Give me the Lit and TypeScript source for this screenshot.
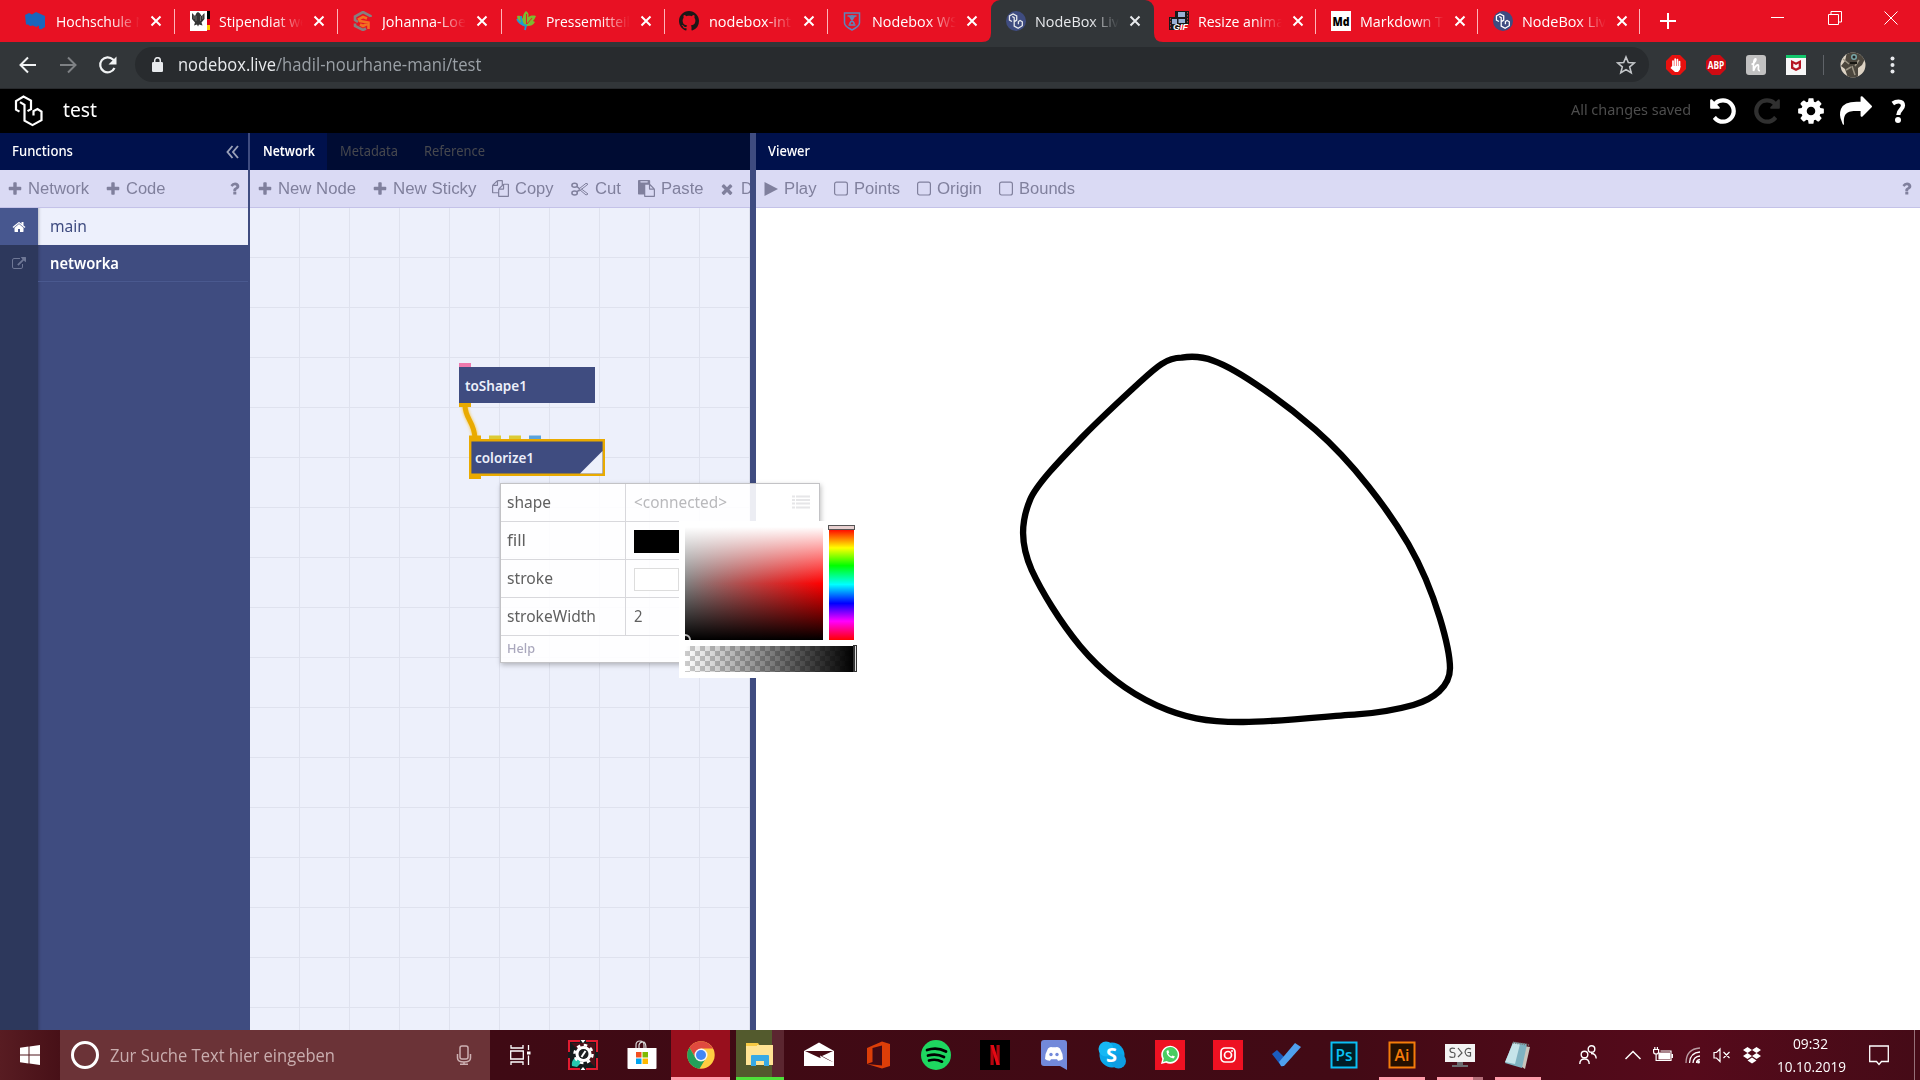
import { LitElement, html, svg, css } from "lit";
import { customElement, property } from "lit/decorators.js";

/* ---------- text that is condensed or widened to a given run width ---------- */
@customElement("text-run")
class TextRun extends LitElement {
  @property({ type: Number }) w = 0;
  static styles = css`
    :host { display: inline-block; white-space: nowrap; flex: none; }
    .run { display: inline-block; transform-origin: 0 50%; white-space: pre; }
  `;
  render() {
    return html`<span class="run"><slot></slot></span>`;
  }
  firstUpdated() {
    const run = this.renderRoot.querySelector(".run") as HTMLElement;
    const natural = run.getBoundingClientRect().width;
    if (this.w && natural) {
      run.style.transform = `scaleX(${this.w / natural})`;
      this.style.width = `${this.w}px`;
    }
  }
}

const fa = (d: string, size = 16, flip = false) => html`
  <svg width=${size} height=${size} viewBox="0 0 1792 1792" fill="currentColor">
    <g transform=${flip ? "translate(1792 0) scale(-1 1)" : ""}>${svg`<path d=${d} />`}</g>
  </svg>`;

const P = {
  plus: "M1600 736v192q0 40-28 68t-68 28h-416v416q0 40-28 68t-68 28h-192q-40 0-68-28t-28-68v-416h-416q-40 0-68-28t-28-68v-192q0-40 28-68t68-28h416v-416q0-40 28-68t68-28h192q40 0 68 28t28 68v416h416q40 0 68 28t28 68z",
  times: "M1490 1322q0 40-28 68l-136 136q-28 28-68 28t-68-28l-294-294-294 294q-28 28-68 28t-68-28l-136-136q-28-28-28-68t28-68l294-294-294-294q-28-28-28-68t28-68l136-136q28-28 68-28t68 28l294 294 294-294q28-28 68-28t68 28l136 136q28 28 28 68t-28 68l-294 294 294 294q28 28 28 68z",
  cog: "M1152 896q0-106-75-181t-181-75-181 75-75 181 75 181 181 75 181-75 75-181zm512-109v222q0 12-8 23t-20 13l-185 28q-19 54-39 91 35 50 107 138 10 12 10 25t-9 23q-27 37-99 108t-94 71q-12 0-26-9l-138-108q-44 23-91 38-16 136-29 186-7 28-36 28h-222q-14 0-24.500-8.500t-11.500-21.500l-28-184q-49-16-90-37l-141 107q-10 9-25 9-14 0-25-11-126-114-165-168-7-10-7-23 0-12 8-23 15-21 51-66.500t54-70.500q-27-50-41-99l-183-27q-13-2-21-12.500t-8-23.500v-222q0-12 8-23t19-13l186-28q14-46 39-92-40-57-107-138-10-12-10-24 0-10 9-23 26-36 98.500-107.500t94.500-71.500q13 0 26 10l138 107q44-23 91-38 16-136 29-186 7-28 36-28h222q14 0 24.500 8.500t11.500 21.500l28 184q49 16 90 37l142-107q9-9 24-9 13 0 25 10 129 119 165 170 7 8 7 22 0 12-8 23-15 21-51 66.500t-54 70.500q26 50 41 98l183 28q13 2 21 12.500t8 23.500z",
  undo: "M1664 896q0 156-61 298t-164 245-245 164-298 61q-172 0-327-72.500t-264-204.500q-7-10-6.500-22.500t8.500-20.500l137-138q10-9 25-9 16 2 23 12 73 95 179 147t225 52q104 0 198.500-40.500t163.500-109.500 109.500-163.500 40.500-198.500-40.500-198.500-109.500-163.500-163.500-109.500-198.500-40.500q-98 0-188 35.500t-160 101.500l137 138q31 30 14 69-17 40-59 40h-448q-26 0-45-19t-19-45v-448q0-42 40-59 39-17 69 14l130 129q107-101 244.500-156.500t284.500-55.500q156 0 298 61t245 164 164 245 61 298z",
  home: "M1472 992v480q0 26-19 45t-45 19h-384v-384h-256v384h-384q-26 0-45-19t-19-45v-480q0-1 .5-3t.5-3l575-474 575 474q1 2 1 6zm223-69l-62 74q-8 9-21 11h-3q-13 0-21-7l-692-577-692 577q-12 8-24 7-13-2-21-11l-62-74q-8-10-7-23.500t11-21.500l719-599q32-26 76-26t76 26l244 204v-195q0-14 9-23t23-9h192q14 0 23 9t9 23v408l219 182q10 8 11 21.500t-7 23.500z",
  ext: "M1408 928v320q0 119-84.500 203.500t-203.500 84.500h-832q-119 0-203.500-84.500t-84.500-203.500v-832q0-119 84.500-203.500t203.500-84.500h704q14 0 23 9t9 23v64q0 14-9 23t-23 9h-704q-66 0-113 47t-47 113v832q0 66 47 113t113 47h832q66 0 113-47t47-113v-320q0-14 9-23t23-9h64q14 0 23 9t9 23zm384-864v512q0 26-19 45t-45 19-45-19l-176-176-652 652q-10 10-23 10t-23-10l-114-114q-10-10-10-23t10-23l652-652-176-176q-19-19-19-45t19-45 45-19h512q26 0 45 19t19 45z",
  share: "M1792 640q0 26-19 45l-512 512q-19 19-45 19t-45-19-19-45v-256h-224q-98 0-175.500 6t-154 21.500-133 42.500-105.500 69.500-80 101-48.500 138.500-17.500 181q0 55 5 123 0 6 2.500 23.500t2.500 26.500q0 15-8.500 25t-23.500 10q-16 0-28-17-7-9-13-22t-13.500-30-10.500-24q-127-285-127-451 0-199 53-333 162-403 875-403h224v-256q0-26 19-45t45-19 45 19l512 512q19 19 19 45z",
  question: "M1088 1256v240q0 16-12 28t-28 12h-240q-16 0-28-12t-12-28v-240q0-16 12-28t28-12h240q16 0 28 12t12 28zm316-600q0 54-15.500 101t-35 76.500-55 59.500-57.500 43.500-61 35.500q-41 23-68.500 65t-27.500 67q0 17-12 32.500t-28 15.500h-240q-15 0-25.500-18.500t-10.500-37.500v-45q0-83 65-156.500t143-108.500q59-27 84-56t25-76q0-42-46.500-74t-107.500-32q-65 0-108 29-35 25-107 115-13 16-31 16-12 0-25-8l-164-125q-13-10-15.500-25t5.500-28q160-266 464-266 80 0 161 31t146 83 106 127.500 41 158.500z",
  files: "M1696 384q40 0 68 28t28 68v1216q0 40-28 68t-68 28h-960q-40 0-68-28t-28-68v-288h-544q-40 0-68-28t-28-68v-672q0-40 20-88t48-76l408-408q28-28 76-48t88-20h416q40 0 68 28t28 68v328q68-40 128-40h416zm-544 213l-299 299h299v-299zm-640-384l-299 299h299v-299zm196 647l316-316v-416h-384v416q0 40-28 68t-68 28h-416v640h512v-256q0-40 20-88t48-76zm956 804v-1152h-384v416q0 40-28 68t-68 28h-416v640h896z",
  paste: "M768 1664h896v-640h-416q-40 0-68-28t-28-68v-416h-384v1152zm256-1440v-64q0-13-9.500-22.500t-22.500-9.500h-704q-13 0-22.500 9.500t-9.500 22.500v64q0 13 9.500 22.500t22.500 9.500h704q13 0 22.500-9.500t9.500-22.500zm256 672h299l-299-299v299zm512 128v672q0 40-28 68t-68 28h-960q-40 0-68-28t-28-68v-160h-544q-40 0-68-28t-28-68v-1344q0-40 28-68t68-28h1088q40 0 68 28t28 68v328q21 13 36 28l408 408q28 28 48 76t20 88z",
};

const knot = svg`
  <path d="M8.5 16.5 4 14V6.500L10.500 3 17 6.500V14l-3.500 2.200 M9 7.500l3.500 2V24.500l7 4 7.500-4.500V17l-4-2.500-3 2v5" fill="none" stroke="currentColor" stroke-width="2.300"/>`;
const knotIcon = html`<svg class="knot" width="20" height="20" viewBox="0 0 20 20"><circle cx="10" cy="10" r="10" fill="#3f4c80"/><g transform="translate(1.200 1.300) scale(.56)">${knot}</g></svg>`;

/* ---------- browser window frame ---------- */
const favicons: Record<string, unknown> = {
  hs: html`<svg width="20" height="20" viewBox="0 0 20 20"><path d="M0 4 4 2l3 1.500L11 1l9 4v11l-4 2.500-2-1v-3l-3 1.500-3-1.500-3 .5-2-1.500H1z" fill="#1a66bd"/></svg>`,
  eagle: html`<svg width="20" height="20" viewBox="0 0 20 20"><path fill="#fff" d="M0 0h17v20H0z"/><path d="M17 0h3v8h-3z" fill="#000"/><path d="M17 8h3v6h-3z" fill="#e00018"/><path d="M17 14h3v5h-3z" fill="#fc0"/><path d="M2 2l3 3 1.500-3L8 1l2 1.500L11.500 5l3-3v6l-3 3.500 1 3L9 13.500 8 15.500 7 13.500 4 14.500l1-3L2 8z" fill="#333"/><path d="M4 4v4M6 5v5M10.500 5v5M12.700 4v4" stroke="#999" stroke-width=".6"/></svg>`,
  hexS: html`<svg width="20" height="20" viewBox="0 0 20 20" fill="none" stroke-width="2.600"><path d="M17.500 6V5L10 1 2 5.500V9l3 2M2 12.500V15l8 4 3-1.500" stroke="#86807f"/><path d="M14 7.500l-4-1.500-4 2 1 2 8.500 1.500V18M14 13l-4 2-3-1.500" stroke="#f37021"/></svg>`,
  leaf: html`<svg width="20" height="20" viewBox="0 0 20 20"><path d="M1 5c3-1 5 0 6 3 0-3 0-5 3-8 3 2 3 4 2 6 2-1 4-2 8-1-1 2-2 4-3 5l2 1c-2 3-4 4-7 4-5 1-10-2-11-10z" fill="#7dba2f"/><path d="M1 8c2 4 4 6 9 6.500L9 19M5 5c0 4 1 8 4 10" stroke="#1e9bd0" stroke-width="1.800" fill="none"/><path d="M10.500 3v10M16 7l-5 6" stroke="#e91528" stroke-width=".9"/></svg>`,
  github: html`<svg width="20" height="20" viewBox="0 0 16 16"><path fill="#1b1817" d="M8 0C3.580 0 0 3.580 0 8c0 3.540 2.290 6.530 5.470 7.590.4.070.55-.17.55-.38 0-.19-.01-.82-.01-1.490-2.010.37-2.530-.49-2.690-.94-.09-.23-.48-.94-.82-1.130-.28-.15-.68-.52-.01-.53.63-.01 1.080.58 1.230.82.72 1.210 1.870.87 2.330.66.07-.52.28-.87.510-1.070-1.780-.2-3.640-.89-3.640-3.950 0-.87.31-1.590.82-2.150-.08-.2-.36-1.020.08-2.120 0 0 .67-.21 2.200.82.640-.18 1.320-.27 2-.27s1.360.09 2 .27c1.530-1.040 2.200-.82 2.200-.82.44 1.100.16 1.920.08 2.120.51.56.82 1.270.82 2.150 0 3.070-1.870 3.750-3.650 3.950.29.25.54.73.54 1.480 0 1.070-.01 1.930-.01 2.200 0 .21.15.46.55.38A8.010 8.010 0 0 0 16 8c0-4.420-3.580-8-8-8z"/></svg>`,
  shield: html`<svg width="20" height="20" viewBox="0 0 20 20" fill="none" stroke="#5d86bb" stroke-width="1.500"><path d="M2.500 2h15v10c0 3-3.500 5-7.500 7-4-2-7.500-4-7.500-7z"/><path d="M5.500 5h9M7.500 5l5 8M12.500 5l-5 8M6.500 14h7M10 4v3"/></svg>`,
  knot: knotIcon,
  gif: html`<svg width="20" height="20" viewBox="0 0 20 20"><path fill="#181818" d="M6 0h14v14H6zM0 6h11v13H0z"/><path fill="#98afd4" d="M9 1h7v5H9zM9.500 8H16v4H9.500zM3 8h5v5H3z"/><path d="M18.500 1v13M1.500 7v12" stroke="#a44" stroke-dasharray="1.500 1.500"/><text x="4" y="19" font-family="Liberation Sans" font-weight="700" font-style="italic" font-size="9" fill="#fff" textLength="15" lengthAdjust="spacingAndGlyphs">GIF</text></svg>`,
  md: html`<svg width="20" height="20" viewBox="0 0 20 20"><path fill="#fff" d="M0 0h20v20H0z"/><text x="1.500" y="14.500" font-family="Open Sans" font-weight="800" font-size="12" textLength="17" lengthAdjust="spacingAndGlyphs">Md</text></svg>`,
};
const tabs = [
  ["hs", "Hochschule N", 90], ["eagle", "Stipendiat we", 89], ["hexS", "Johanna-Loe", 84], ["leaf", "Pressemitteil", 84],
  ["github", "nodebox-int", 82], ["shield", "Nodebox WS", 86], ["knot", "NodeBox Liv", 84], ["gif", "Resize anima", 86],
  ["md", "Markdown T", 83], ["knot", "NodeBox Liv", 84],
] as [string, string, number][];

@customElement("browser-chrome")
class BrowserChrome extends LitElement {
  static styles = css`
    :host { display: block; font-family: "Open Sans", "Noto Sans", sans-serif; }
    svg { display: block; flex: none; }
    .tabs { height: 42px; background: #e81123; display: flex; padding-left: 12px; color: #fff; }
    .tab { width: 163.200px; flex: none; height: 42px; box-sizing: border-box; display: flex; align-items: center; padding: 0 0 0 14.500px; font-size: 15px; position: relative; }
    .tab:nth-child(n+8) { width: 162px; }
    .tab:first-child { padding-left: 13px; }
    .tab::after { content: ""; position: absolute; right: 0; top: 9px; width: 1px; height: 25px; background: #ffb3b9; }
    .tab.active { background: #323639; border-radius: 9px 9px 0 0; color: #e8eaed; }
    .tab.active::after, .tab.before::after { display: none; }
    .tab.active .foot { position: absolute; bottom: 0; left: -9px; width: 181px; height: 9px; }
    .title { width: 84px; margin: -1px 0 0 9.500px; overflow: hidden; -webkit-mask-image: linear-gradient(90deg, #000 66%, transparent 100%); mask-image: linear-gradient(90deg, #000 66%, transparent 100%); }
    .tab:first-child .title { margin-left: 10.500px; }
    .x { margin-left: 10px; }
    .new { align-self: center; margin-left: 20px; }
    .win { margin-left: auto; display: flex; gap: 42.500px; padding-right: 22px; padding-top: 11px; }
    .bar { height: 47px; background: #323639; box-sizing: border-box; border-bottom: 1px solid #27292c; display: flex; align-items: center; color: #e8eaed; }
    .nav { width: 135px; display: flex; padding-left: 18px; box-sizing: border-box; gap: 20px; margin-top: -1px; }
    .omni { width: 1514px; height: 35px; border-radius: 18px; background: #282b2e; display: flex; align-items: center; font-size: 17.500px; padding: 0 13px 0 17px; box-sizing: border-box; margin-top: -1px; }
    .omni text-run { margin-top: -2px; }
    .lock { margin-right: 15px; }
    .path { color: #9aa0a6; }
    .star { margin-left: auto; }
    .ext { display: flex; align-items: center; gap: 20px; margin-left: 17px; margin-top: -1px; }
    .line { width: 1px; height: 20px; background: #5f6368; margin: 0 -4px 0 -3px; }
  `;
  render() {
    return html`
      <div class="tabs">
        ${tabs.map(([icon, label, w], i) => html`
          <div class="tab ${i === 6 ? "active" : i === 5 ? "before" : ""}">
            ${i === 6 ? html`<svg class="foot" viewBox="0 0 181 9"><path fill="#323639" d="M0 9q9 0 9-9v9zM181 9q-9 0-9-9v9z"/></svg>` : ""}
            ${favicons[icon]}
            <div class="title"><text-run .w=${w}>${label}</text-run></div>
            <svg class="x" width="12" height="12" viewBox="0 0 12 12" stroke="currentColor" stroke-width="2"><path d="M1.500 1.500l9 9M10.500 1.500l-9 9"/></svg>
          </div>`)}
        <svg class="new" width="16" height="16" viewBox="0 0 16 16" stroke="#fff" stroke-width="2"><path d="M8 0v16M0 8h16"/></svg>
        <div class="win">
          <svg width="14" height="14" viewBox="0 0 14 14" stroke="#fff"><path d="M0 6.500h13"/></svg>
          <svg width="14" height="14" viewBox="0 0 14 14" fill="none" stroke="#fff"><path d="M.5 3.500h10v10H.5zM3 3V.5h10.500V11H11"/></svg>
          <svg width="14" height="14" viewBox="0 0 14 14" stroke="#fff"><path d="M.5 .5l13 13M13.500 .5l-13 13"/></svg>
        </div>
      </div>
      <div class="bar">
        <div class="nav">
          <svg width="20" height="20" viewBox="0 0 20 20" fill="none" stroke="#f1f3f4" stroke-width="2"><path d="M18 10H3M10 2.500 2.500 10l7.500 7.500"/></svg>
          <svg width="20" height="20" viewBox="0 0 20 20" fill="none" stroke="#7e8184" stroke-width="2"><path d="M2 10h15M10 2.500l7.500 7.500-7.500 7.500"/></svg>
          <svg width="20" height="20" viewBox="0 0 20 20"><path d="M16.500 13A7.500 7.500 0 1 1 15 4.500l2 2" fill="none" stroke="#f1f3f4" stroke-width="2.200"/><path d="M18.500 1.500v8h-8z" fill="#f1f3f4"/></svg>
        </div>
        <div class="omni">
          <svg class="lock" width="11" height="15" viewBox="0 0 11 15"><rect y="5" width="11" height="10" rx="1.300" fill="#e8eaed"/><path d="M2.700 6V3.500a2.800 2.800 0 0 1 5.600 0V6" fill="none" stroke="#e8eaed" stroke-width="1.500"/></svg>
          <text-run .w=${98}>nodebox.live</text-run><text-run class="path" .w=${205.5}>/hadil-nourhane-mani/test</text-run>
          <svg class="star" width="20" height="20" viewBox="0 0 20 20" fill="none" stroke="#c3c6c9" stroke-width="1.600"><path d="M10 2l2.300 5.600 6 .4-4.600 3.900 1.500 5.900L10 14.600l-5.200 3.200 1.500-5.900L1.700 8l6-.4z"/></svg>
        </div>
        <div class="ext">
          <svg width="20" height="20" viewBox="0 0 20 20"><path fill="#e8110f" d="M6 0h8l6 6v8l-6 6H6l-6-6V6z"/><path d="M7 6v6M9.200 4v8M11.400 4.500V12M13.500 6.500V12" stroke="#fff" stroke-width="1.700" stroke-linecap="round"/><path fill="#fff" d="M6 11h8.500l-.5 3.500-2 2.500H9l-4.500-4 .8-1z"/></svg>
          <svg width="20" height="20" viewBox="0 0 20 20"><path fill="#d00a12" d="M6 0h8l6 6v8l-6 6H6l-6-6V6z"/><text x="1.800" y="13.700" font-family="Open Sans" font-weight="700" font-size="10" fill="#fff" textLength="16.500" lengthAdjust="spacingAndGlyphs">ABP</text></svg>
          <svg width="20" height="20" viewBox="0 0 20 20"><rect width="20" height="20" rx="3" fill="#c1c1c1"/><path d="M5.500 9.500c4-1.500 5.500-6.500 3.500-5.500-2 1-1.500 6-1.500 12 1-5 5-8 5-5 0 2-1 5 1.500 4.500" fill="none" stroke="#fff" stroke-width="1.700"/></svg>
          <svg width="20" height="20" viewBox="0 0 20 20"><path fill="#f7f7f7" d="M0 0h20v20H0z"/><path fill="#12c76c" d="M0 0h20v3H0z"/><path fill="#b51423" d="M5 5l5 2.500L15 5v8.500L10 16l-5-2.500zM7.300 8.500V12l2.700 1.500 2.700-1.500V8.500L10 10z" fill-rule="evenodd"/></svg>
          <div class="line"></div>
          <svg width="26" height="26" viewBox="0 0 26 26"><defs><clipPath id="av"><circle cx="13" cy="13" r="12.500"/></clipPath></defs><g clip-path="url(#av)"><path fill="#ddd3c4" d="M0 0h26v26H0z"/><path fill="#4b463d" d="M7 0h12l7 5-4 8-4 3v10H8l-3-9-4-3 4-5z"/><path d="M3 7l6 5M12 14l3 9M19 8l-4 6M6 18l5-3" stroke="#9c9585" stroke-width="1.500"/><circle cx="14" cy="5" r="3" fill="#78a6a8"/><circle cx="14" cy="5" r="1.500" fill="#222"/><path d="M10 11h7" stroke="#181713" stroke-width="2"/></g></svg>
          <svg width="14" height="20" viewBox="0 0 14 20" fill="#e8eaed"><circle cx="6.500" cy="3.500" r="2"/><circle cx="6.500" cy="10" r="2"/><circle cx="6.500" cy="16.500" r="2"/></svg>
        </div>
      </div>`;
  }
}

const outline =
  "M640 62C720 90 860 195 945 268C1060 368 1165 510 1225 612C1310 760 1350 930 1350 985C1350 1040 1300 1078 1240 1095" +
  "C1190 1109 1130 1119 1070 1123C1000 1127 830 1146 730 1146C620 1147 550 1132 470 1096C380 1055 300 990 240 918" +
  "C180 845 125 755 95 690C60 610 63 545 90 480C110 430 200 340 250 288C300 237 370 172 420 126C470 80 500 53 545 53" +
  "C575 48 605 49 640 62Z";

/* ---------- node editor ---------- */
@customElement("node-editor")
class NodeEditor extends LitElement {
  static styles = css`
    :host { display: flex; flex-direction: column; height: 941px; font-family: "Noto Sans", "Open Sans", sans-serif; }
    svg { display: block; flex: none; }
    .top { height: 44px; background: #000; color: #fff; display: flex; align-items: center; padding: 0 8px 0 14px; }
    .name { font-size: 19px; margin: -3px 0 0 20px; }
    .saved { color: #4d4d4d; font-size: 15px; margin: -4px 17px 0 auto; }
    .acts { display: flex; align-items: center; gap: 14px; margin-top: -1px; }
    .dim { color: #303030; }
    .cols { flex: 1; display: grid; grid-template-columns: 248px 2px 500px 6px 1fr; min-height: 0; }
    .split { background: #3f4c80; }
    .col { display: flex; flex-direction: column; min-width: 0; overflow: hidden; }
    .head { height: 37px; flex: none; background: #00114c; color: #fff; font-size: 14px; font-weight: 500; display: flex; align-items: center; justify-content: space-between; padding: 0 9px 0 12px; }
    .head text-run { margin-top: -2px; }
    .net { background: #000c33; padding: 0; justify-content: flex-start; color: #46484e; font-weight: 400; }
    .net .on { background: #00114c; color: #fff; font-weight: 600; width: 77px; box-sizing: border-box; height: 37px; display: flex; align-items: center; padding-left: 13px; margin-right: 13px; }
    .net .gap { margin-right: 26px; }
    .tools { height: 38px; box-sizing: border-box; flex: none; background: #dadaf4; border-bottom: 1px solid #c4c2e8; color: #80809d; font: 16px "Liberation Sans", Arial, sans-serif; display: flex; align-items: center; white-space: nowrap; overflow: hidden; padding: 0 5px 0 8px; }
    .tool { display: flex; align-items: center; gap: 6px; margin-right: 17px; flex: none; }
    .tight svg { margin: 0 -1px; }
    .near { margin-right: 15.500px; }
    .ask { margin-left: auto; }
    .ask svg { width: 17px; height: 17px; }
    .list { flex: 1; background: #2d385f; }
    .row { display: grid; grid-template-columns: 38px 1fr; height: 37px; font-size: 16px; }
    .row.tail { height: 800px; }
    .cell { display: flex; align-items: center; justify-content: center; background: #2d385c; color: #6f7896; }
    .lab { display: flex; align-items: center; padding-left: 12px; background: #3f4c80; color: #fff; font-weight: 600; border-bottom: 1px solid #4a598f; box-shadow: inset 3px 0 3px -2px rgba(0,0,0,.22); }
    .home .cell { background: #47578f; color: #fff; }
    .home .lab { background: #edf0fc; color: #3f4c80; font-weight: 400; border: 0; padding-bottom: 2px; }
    .tail .lab { border: 0; }
    .grid { flex: 1; background-color: #edf0fb; background-image: linear-gradient(to left, #dfe2ee 1px, transparent 1px), linear-gradient(to top, #dfe2ee 1px, transparent 1px); background-size: 50px 50px; }
    .nodes { width: 500px; height: 822px; }
    .view { flex: 1; background: #fff; }
  `;
  tool(icon: unknown, label: string, w: number, cls = "") {
    return html`<div class="tool ${cls}">${icon}<text-run .w=${w}>${label}</text-run></div>`;
  }
  render() {
    const box = html`<svg width="14" height="16" viewBox="0 0 14 16"><rect x=".6" y="1.200" width="12.800" height="12.800" rx="2" fill="none" stroke="currentColor" stroke-width="1.200"/></svg>`;
    const cut = html`<svg width="18" height="16" viewBox="0 0 18 16" fill="none" stroke="currentColor" stroke-width="1.500"><ellipse cx="3.600" cy="4.300" rx="2.700" ry="2"/><ellipse cx="3.600" cy="12" rx="2.700" ry="2"/><path d="M5.800 5.500l3 2.300M5.800 10.800l3-2.200"/><path stroke-width="1" d="M8.500 7.500 15 2.300l2 .9L8.300 10M8.500 8.500 15 14l2-1-6.500-5"/></svg>`;
    const play = html`<svg width="14" height="16" viewBox="0 0 14 16"><path d="M.5 1v14L14 8z" fill="currentColor"/></svg>`;
    return html`
      <div class="top">
        <svg width="29" height="32" viewBox="0 0 29 32" color="#fff"><path d="M5.500 17 2 15V6.500L9.500 2 17 6v8.500l-3.500 2 M6 7.500l4.500 2.800V26l8 4.500 9-5V17l-4-2.500-4 2v4.500" transform="translate(0 -.4)" fill="none" stroke="currentColor" stroke-width="2.200"/></svg>
        <div class="name"><text-run .w=${34}>test</text-run></div>
        <div class="saved"><text-run .w=${120}>All changes saved</text-run></div>
        <div class="acts">
          ${fa(P.undo, 30)}<span class="dim">${fa(P.undo, 30, true)}</span>${fa(P.cog, 30)}
          <svg width="32" height="32" viewBox="0 0 1792 1792" fill="#fff"><path d=${P.share}/></svg>
          <svg width="26" height="26" viewBox="0 0 26 26"><path d="M6.800 5.500Q9.500 3.500 12.500 3.500 17 3.500 17 7.500C17 11.500 12.300 11.500 12.300 17" fill="none" stroke="#fff" stroke-width="4.200"/><circle cx="12" cy="22" r="3" fill="#fff"/></svg>
        </div>
      </div>
      <div class="cols">
        <div class="col">
          <div class="head"><text-run .w=${61}>Functions</text-run>
            <svg width="13" height="14" viewBox="0 0 13 14" fill="none" stroke="#99a0b8" stroke-width="1.900"><path d="M6.500 1 1.500 7l5 6M12 1 7 7l5 6"/></svg></div>
          <div class="tools">${this.tool(fa(P.plus), "Network", 61, "tight")}${this.tool(fa(P.plus), "Code", 39.5, "tight")}<div class="ask">${fa(P.question)}</div></div>
          <div class="list">
            <div class="row home"><div class="cell">${fa(P.home, 14)}</div><div class="lab"><text-run .w=${37}>main</text-run></div></div>
            <div class="row"><div class="cell">${fa(P.ext, 14)}</div><div class="lab"><text-run .w=${69}>networka</text-run></div></div>
            <div class="row tail"><div class="cell"></div><div class="lab"></div></div>
          </div>
        </div>
        <div class="split"></div>
        <div class="col">
          <div class="head net"><div class="on"><text-run .w=${52}>Network</text-run></div><text-run class="gap" .w=${58}>Metadata</text-run><text-run .w=${61}>Reference</text-run></div>
          <div class="tools">${this.tool(fa(P.plus), "New Node", 78, "tight")}${this.tool(fa(P.plus), "New Sticky", 83.5, "tight near")}${this.tool(fa(P.files, 17), "Copy", 38.5)}${this.tool(cut, "Cut", 26)}${this.tool(fa(P.paste, 17), "Paste", 42.5, "near")}${this.tool(fa(P.times), "Delete", 46)}</div>
          <div class="grid">
            <svg class="nodes" viewBox="250 208 500 822" font-family="Noto Sans" font-weight="600" font-size="14.500">
              <defs><filter id="glow" x="-100%" y="-50%" width="300%" height="200%"><feGaussianBlur stdDeviation="1.500"/></filter></defs>
              <path d="M465 405c0 14 9 16 10 33" fill="none" stroke="#f5cd62" stroke-width="6" filter="url(#glow)"/>
              <path d="M465 405c0 14 9 16 10 33" fill="none" stroke="#e9aa00" stroke-width="5"/>
              <path fill="#ef79ad" d="M459 363h12v4h-12z"/><path fill="#3f4c80" d="M459 367h136v36H459z"/><path fill="#e9aa00" d="M459 403h12v4h-12zM469 435.500h12v4h-12zM469 475h12v4h-12z"/>
              <path fill="#dccb35" d="M489 435.500h12v4h-12zM509 435.500h12v4h-12z"/><path fill="#5ba3dc" d="M529 435.500h12v4h-12z"/>
              <path fill="#3f4c80" stroke="#e9aa00" stroke-width="2.400" d="M470.200 440.200h133.600v34.600H470.200z"/><path fill="#edf0fb" d="M602.500 451v22.500h-22.500z"/>
              <text x="465" y="391" fill="#eceffa" textLength="62" lengthAdjust="spacingAndGlyphs">toShape1</text>
              <text x="475" y="463" fill="#eceffa" textLength="59" lengthAdjust="spacingAndGlyphs">colorize1</text>
            </svg>
          </div>
        </div>
        <div class="split"></div>
        <div class="col">
          <div class="head"><text-run .w=${42}>Viewer</text-run></div>
          <div class="tools">${this.tool(play, "Play", 32.5)}${this.tool(box, "Points", 46)}${this.tool(box, "Origin", 45)}${this.tool(box, "Bounds", 56)}<div class="ask">${fa(P.question)}</div></div>
          <div class="view">
            <svg width="1164" height="822" viewBox="756 208 1164 822"><g transform="translate(1000 340) scale(.33333)">
              <path fill="none" stroke="#000" stroke-width="19" stroke-linejoin="round" d=${outline}/></g></svg>
          </div>
        </div>
      </div>`;
  }
}

/* ---------- floating parameter panel with the colour picker ---------- */
@customElement("param-panel")
class ParamPanel extends LitElement {
  static styles = css`
    :host { position: absolute; left: 500px; top: 483px; font-family: "Noto Sans", "Open Sans", sans-serif; }
    .panel { width: 320px; height: 180px; box-sizing: border-box; border: 1px solid #c3c3c6; background: rgba(255,255,255,.9); box-shadow: 1px 2px 5px rgba(0,0,0,.25); color: #606060; font-size: 16px; }
    .r { height: 38px; box-sizing: border-box; display: grid; grid-template-columns: 125px 1fr; border-bottom: 1px solid #d8d8dc; }
    .k { display: flex; align-items: center; padding: 0 0 2px 6px; border-right: 1px solid #d8d8dc; }
    .v { display: flex; align-items: center; padding: 0 9px 2px 7.500px; justify-content: space-between; }
    .conn { color: #b9b9bc; }
    .sw { width: 46px; height: 23px; box-sizing: border-box; background: #000; margin-top: 3px; }
    .sw.w { background: #fff; border: 1px solid #ddd; width: 45px; }
    .help { color: #aaa8bd; font-size: 13px; font-weight: 500; padding: 3px 0 0 6px; }
    .picker { position: absolute; left: 179px; top: 38px; width: 179px; height: 157px; background: #fff; box-sizing: border-box; padding: 6px; display: grid; grid-template-columns: 138px 25px; grid-template-rows: 113px 26px; column-gap: 6px; row-gap: 6px; }
    .sl { background: linear-gradient(to bottom, #fff 0, rgba(255,255,255,0) 50%, rgba(0,0,0,0) 50%, #000 100%), linear-gradient(to right, #808080, #f00); position: relative; overflow: hidden; }
    .dot { position: absolute; left: -6px; bottom: -6px; width: 8px; height: 8px; border: 2px solid #bbb; border-radius: 50%; }
    .hue { margin-top: 2px; background: linear-gradient(to bottom, #f00, #ff0 17%, #0f0 33%, #0ff 50%, #00f 67%, #f0f 83%, #f00); position: relative; }
    .knob { position: absolute; left: -1px; top: -4px; width: 25px; height: 3px; border: 1px solid #555; background: #e8d0d0; }
    .alpha { grid-column: 1 / 3; background: linear-gradient(to right, transparent, #000), repeating-conic-gradient(#ccc 0 25%, #fff 0 50%) 0 0 / 10px 10px; position: relative; }
    .end { position: absolute; right: -3px; top: -1px; width: 1px; height: 25px; border: 1px solid #333; border-left-width: 2px; background: #ddd; }
  `;
  render() {
    return html`
      <div class="panel">
        <div class="r"><div class="k"><text-run .w=${44}>shape</text-run></div><div class="v conn"><text-run .w=${93}>&lt;connected&gt;</text-run>
          <svg width="18" height="14" viewBox="0 0 18 14" stroke="#e6e6e8" stroke-width="2"><path d="M0 1.500h3M4 1.500h14M0 5h3M4 5h14M0 8.500h3M4 8.500h14M0 12.500h3M4 12.500h14"/></svg></div></div>
        <div class="r"><div class="k"><text-run .w=${19}>fill</text-run></div><div class="v"><div class="sw"></div></div></div>
        <div class="r"><div class="k"><text-run .w=${46}>stroke</text-run></div><div class="v"><div class="sw w"></div></div></div>
        <div class="r"><div class="k"><text-run .w=${89}>strokeWidth</text-run></div><div class="v"><text-run .w=${8.5}>2</text-run></div></div>
        <div class="help"><text-run .w=${28}>Help</text-run></div>
      </div>
      <div class="picker">
        <div class="sl"><div class="dot"></div></div>
        <div class="hue"><div class="knob"></div></div>
        <div class="alpha"><div class="end"></div></div>
      </div>`;
  }
}

/* ---------- desktop task bar ---------- */
const sv = (body: unknown, cls = "") => html`<svg class=${cls} width="30" height="30" viewBox="0 0 30 30">${body}</svg>`;
const apps: { i: unknown; c?: string }[] = [
  { i: sv(svg`<path fill="#131b1c" d="M0 0h30v30H0z"/><path d="M3 3h24v24" fill="#4c1018"/><path d="M1 12V1h11M18 1h11v11M29 18v11H18M12 29H1V18" fill="none" stroke="#e01c30" stroke-width="2"/><path d="M4 26c-1-5 2-9 7-9l2 6-4 4z" fill="#27c9b0"/><circle cx="15.500" cy="14" r="6.300" fill="none" stroke="#fff" stroke-width="3.500"/><circle cx="15.500" cy="14" r="9" fill="none" stroke="#fff" stroke-width="2.500" stroke-dasharray="3.500 3.568"/><circle cx="15.500" cy="14" r="5" fill="#1c2022"/><path d="M13.500 17l4-6" stroke="#fff" stroke-width="2"/><path d="M12.500 0h5L15 3zM12.500 30h5L15 27z" fill="#fff"/>`) },
  { i: sv(svg`<path d="M9 9V5q0-4 4-4t4 4v4M12 9V5q1-4 5-3 2 1 2 7" fill="none" stroke="#d8d8d8" stroke-width="1.200"/><path fill="#fff" d="M.5 8h29v20q0 1-1 1h-27q-1 0-1-1z"/><path fill="#f25022" d="M9 12h5.500v5.500H9z"/><path fill="#7fba00" d="M15.500 12H21v5.500h-5.500z"/><path fill="#00a4ef" d="M9 18.500h5.500V24H9z"/><path fill="#ffb900" d="M15.500 18.500H21V24h-5.500z"/>`) },
  { c: "chrome", i: sv(svg`<circle cx="15" cy="15" r="13.700" fill="#ffcd41"/><path fill="#e04a3f" d="M3.500 7.500A13.700 13.700 0 0 1 27 8.500H15L9.500 18z"/><path fill="#23a05a" d="M3.500 7.500A13.700 13.700 0 0 0 13.500 28.700L20 18l-5 3-5.500-3z"/><circle cx="15" cy="15" r="6.500" fill="#f5f5f5"/><circle cx="15" cy="15" r="5" fill="#4285f4"/>`) },
  { c: "files", i: sv(svg`<path fill="#f5c542" d="M1 3h12l2 3h-3v3H1z"/><path fill="#ffe394" d="M1 5h27v20H1z"/><path fill="#f6c944" d="M1 3h11v3H1z"/><path fill="#38a9e4" d="M6 16q0-1 1-1h16q1 0 1 1v10h-5v-5h-8v5H6z"/>`) },
  { i: sv(svg`<path fill="#fff" d="M15 2.500 30 11v15H0V11z"/><path fill="#440a14" d="M1 11h28l-11 5 11 6L15 17.500z"/><path fill="#fff" d="M16 15.500l13 7v1H18z"/>`) },
  { i: sv(svg`<path fill="#dc3e08" d="M4 8 19 1.500l8 2.500v22l-8 2.500L4 24l15 1.500v-20L9.500 8v14L4 24z"/>`) },
  { i: sv(svg`<circle cx="15" cy="15" r="15" fill="#1ed760"/><path d="M6 10q10-3.500 19 1.500M7 15.500q8.500-2.500 16 1.500M8 20.500q7-2 13 1.200" fill="none" stroke="#000" stroke-width="2.700" stroke-linecap="round"/>`) },
  { i: sv(svg`<path fill="#000" d="M0 0h30v30H0z"/><path fill="#b1060f" d="M10.500 5h3.200v20h-3.200zM16.500 5h3.200v20h-3.200z"/><path fill="#e50914" d="M10.500 5h3.200l6 20h-3.200z"/>`) },
  { i: sv(svg`<path fill="#7289da" d="M2 3q0-3 3-3h20q3 0 3 3v27l-7-4H5q-3 0-3-3z"/><path fill="#fff" d="M9 8.500q3-2 4-1.200h4q1-.8 4 1.200 3 5 3 10.500-2 2-5 1.800l-1-1.500H12l-1 1.500Q8 21 6 19q0-5.500 3-10.500z"/><circle cx="12" cy="14.500" r="1.700" fill="#7289da"/><circle cx="18" cy="14.500" r="1.700" fill="#7289da"/>`) },
  { i: sv(svg`<circle cx="15" cy="15" r="12.500" fill="#0aa7ea"/><circle cx="9" cy="9" r="7.500" fill="#16b8f4"/><circle cx="21.500" cy="21" r="7.500" fill="#0f9de2"/><text x="9" y="22" font-family="Open Sans" font-weight="700" font-size="20" fill="#fff">S</text>`) },
  { i: sv(svg`<path fill="#ee1122" d="M0 0h30v30H0z"/><path fill="#fff" d="M6 24l1.300-5A9 9 0 1 1 11 22.700z"/><path fill="#49cc61" d="M8 22l.9-3.500a7.500 7.500 0 1 1 2.700 2.600z"/><path d="M11.500 11q0 6 7 7.500l1.500-2-2.500-1-1.300 1q-2-1-3-3l1-1-1-2.500z" fill="#fff"/>`) },
  { i: sv(svg`<path fill="#ee1122" d="M0 0h30v30H0z"/><g fill="none" stroke="#fff" stroke-width="1.700"><rect x="8" y="8" width="14" height="14" rx="4"/><circle cx="15" cy="15" r="3.500"/></g><circle cx="19" cy="11" r="1" fill="#fff"/>`) },
  { i: sv(svg`<path fill="#1b5cbe" d="M1 14l5-4 10 10-5 7z"/><path fill="#4fa0ee" d="M10 26 8 22 24 3l6 4-17 19z"/>`) },
  { i: sv(svg`<path fill="#001d26" stroke="#0ac0f5" stroke-width="2" d="M2.500 2.500h25v25h-25z"/><text x="6.500" y="21" font-family="Open Sans" font-weight="600" font-size="17" fill="#0ac0f5" textLength="17" lengthAdjust="spacingAndGlyphs">Ps</text>`) },
  { c: "open", i: sv(svg`<path fill="#251000" stroke="#f57c0a" stroke-width="2" d="M2.500 2.500h25v25h-25z"/><text x="7.500" y="21" font-family="Open Sans" font-weight="600" font-size="17" fill="#f57c0a" textLength="15" lengthAdjust="spacingAndGlyphs">Ai</text>`) },
  { c: "open multi", i: sv(svg`<path fill="#f3f3f3" d="M0 4h30v18H0z"/><path fill="#6c6c70" d="M12 22h6v3h5v2H7v-2h5z"/><path d="M10 8.500q-5-1-5 1.500t3 2.500 1.500 4.500Q6 18 4.500 16.500M13 8l4 5-4 4M26 9q-5-2-6 3 1 5 5.500 4v-3.500h-3" fill="none" stroke="#555" stroke-width="1.200"/>`) },
  { c: "open", i: sv(svg`<path fill="#c9c4bb" d="M10 4l17 3-5 22-3-2z"/><path fill="#7fb2c1" d="M10 2l14 2-5 24L2 23z"/><path fill="#c5e4ea" d="M10 3l7 1-5 20-10-2z"/><path d="M10 2.500l16 2.500" stroke="#777" stroke-width="2" stroke-dasharray="1.200 1"/>`) },
];

@customElement("task-bar")
class TaskBar extends LitElement {
  static styles = css`
    :host { display: flex; height: 50px; background: linear-gradient(90deg, #581c22 0, #3f0a14 25%, #420a15 70%, #560a1b 88%, #450b17 100%); color: #fff; font-family: "Open Sans", "Noto Sans", sans-serif; }
    svg { display: block; flex: none; }
    .start { width: 60px; display: grid; place-items: center; background: linear-gradient(90deg, #581c22, #471017); }
    .search { width: 430px; box-sizing: border-box; background: #6b3337; display: flex; align-items: center; padding: 0 18px 0 11px; color: #c9adae; font-size: 18px; }
    .ring { width: 22px; height: 22px; border: 3px solid #fff; border-radius: 50%; margin-right: 11px; }
    .mic { margin-left: auto; }
    .tv { width: 63.700px; display: flex; align-items: center; padding-left: 19.500px; box-sizing: border-box; }
    .apps { display: grid; grid-template-columns: repeat(8, 58.900px) repeat(9, 58px); }
    .app { display: grid; place-items: center; box-sizing: border-box; position: relative; }
    .chrome { background: #980f1d; border-bottom: 3px solid #ff9dab; padding-top: 3px; margin-right: .5px; }
    .files { background: linear-gradient(90deg, #535a2d 36px, #5b2630 36px); border-bottom: 3px solid #4fe03a; margin: 0 5px 0 6px; padding: 3px 0 0 9px; justify-items: start; }
    .open::after { content: ""; position: absolute; left: 6px; right: 6px; bottom: 0; height: 3px; background: #ff9dab; }
    .multi::after { background: linear-gradient(90deg, #ff9dab 36px, #b56e79 36px); }
    .tray { margin-left: auto; display: flex; align-items: center; }
    .people { margin-right: 28px; }
    .g { margin-right: 12px; }
    .clock { width: 72px; margin: 0 22px 0 14px; text-align: center; font-size: 15px; line-height: 23px; height: 46px; }
    .time { margin-right: 2px; }
    .show { width: 5px; height: 50px; margin-left: 25px; border-left: 1px solid #957078; }
  `;
  render() {
    return html`
      <div class="start"><svg width="20" height="20" viewBox="0 0 20 20" fill="#fff"><path d="M0 2.800 8.500 1.500v8H0zM9.500 1.400 20 0v9.500H9.500zM0 10.500h8.500v8L0 17.200zM9.500 10.500H20V20L9.500 18.600z"/></svg></div>
      <div class="search"><div class="ring"></div><text-run .w=${225}>Zur Suche Text hier eingeben</text-run>
        <svg class="mic" width="16" height="20" viewBox="0 0 16 20" fill="none" stroke="#cdb0b2" stroke-width="1.500"><rect x="4" y="1" width="8" height="13" rx="2"/><path d="M1.500 9v4q0 4 6.500 4t6.500-4V9M8 17v2M4 19.300h8"/></svg>
      </div>
      <div class="tv"><svg width="21" height="20" viewBox="0 0 21 20" fill="none" stroke="#fff" stroke-width="1.300"><path d="M1 0v3h12V0M1 20v-3h12v3M.7 6h12.600v8H.7zM18.500 0v5M18.500 10.500V20"/><path d="M17 6.500h3.500v3H17z" fill="#fff" stroke="none"/></svg></div>
      <div class="apps">${apps.map((a) => html`<div class="app ${a.c ?? ""}">${a.i}</div>`)}</div>
      <div class="tray">
        <svg class="people" width="18" height="20" viewBox="0 0 18 20" fill="none" stroke="#fff" stroke-width="1.400"><circle cx="12.500" cy="4" r="3.300"/><circle cx="5.500" cy="9.500" r="3.300"/><path d="M.8 19q0-5 4.700-5t4.700 5M12 8.500q5 0 5.200 5"/></svg>
        <svg class="g" width="16" height="10" viewBox="0 0 16 10" fill="none" stroke="#fff" stroke-width="1.500"><path d="M.5 9 8 1.500 15.500 9"/></svg>
        <svg class="g" width="20" height="16" viewBox="0 0 20 16" fill="none" stroke="#fff" stroke-width="1.200"><path d="M.6 2.500h5V5q0 2-2.500 2T.6 5zM1.800 0v2.500M4.400 0v2.500M3.100 7v6.500H18V4H7.500M19.400 7v4"/><path d="M6 6h10.500v6H6z" fill="#fff"/></svg>
        <svg class="g" width="16" height="17" viewBox="0 0 16 17" fill="none" stroke="#fff" stroke-width="1.300"><path d="M1 16Q1 2 15 1" opacity=".6"/><path d="M4.500 16Q5 5.500 15 5M8 16q.5-6.500 7-7M11.500 16q0-3 3.500-3.500"/><circle cx="13.500" cy="15" r="1.500" fill="#fff" stroke="none"/></svg>
        <svg class="g" width="18" height="16" viewBox="0 0 18 16" fill="none" stroke="#fff" stroke-width="1.200"><path d="M1 5.500h2.500L7 2v12.500L3.500 11H1zM10.500 5l6 6M16.500 5l-6 6"/></svg>
        <svg width="18" height="17" viewBox="0 0 18 17" fill="#fff"><path d="M4.500 0 9 3 4.500 6 0 3zM13.500 0 18 3l-4.500 3L9 3zM4.500 6 9 9l-4.500 3L0 9zM13.500 6 18 9l-4.500 3L9 9zM9 10.500l4.500 3L9 16.500l-4.500-3z"/></svg>
        <div class="clock"><text-run class="time" .w=${35}>09:32</text-run><br /><text-run .w=${69}>10.10.2019</text-run></div>
        <svg width="20" height="21" viewBox="0 0 20 21" fill="none" stroke="#fff" stroke-width="1.300"><path d="M.7 1h18.600v15.500h-6.800L10 19.500l-2.500-3H.7z"/></svg>
        <div class="show"></div>
      </div>`;
  }
}

@customElement("app-root")
class AppRoot extends LitElement {
  static styles = css`
    :host { display: block; width: 1920px; height: 1080px; overflow: hidden; position: relative; background: #000; }
  `;
  render() {
    return html`<browser-chrome></browser-chrome><node-editor></node-editor><task-bar></task-bar><param-panel></param-panel>`;
  }
}
